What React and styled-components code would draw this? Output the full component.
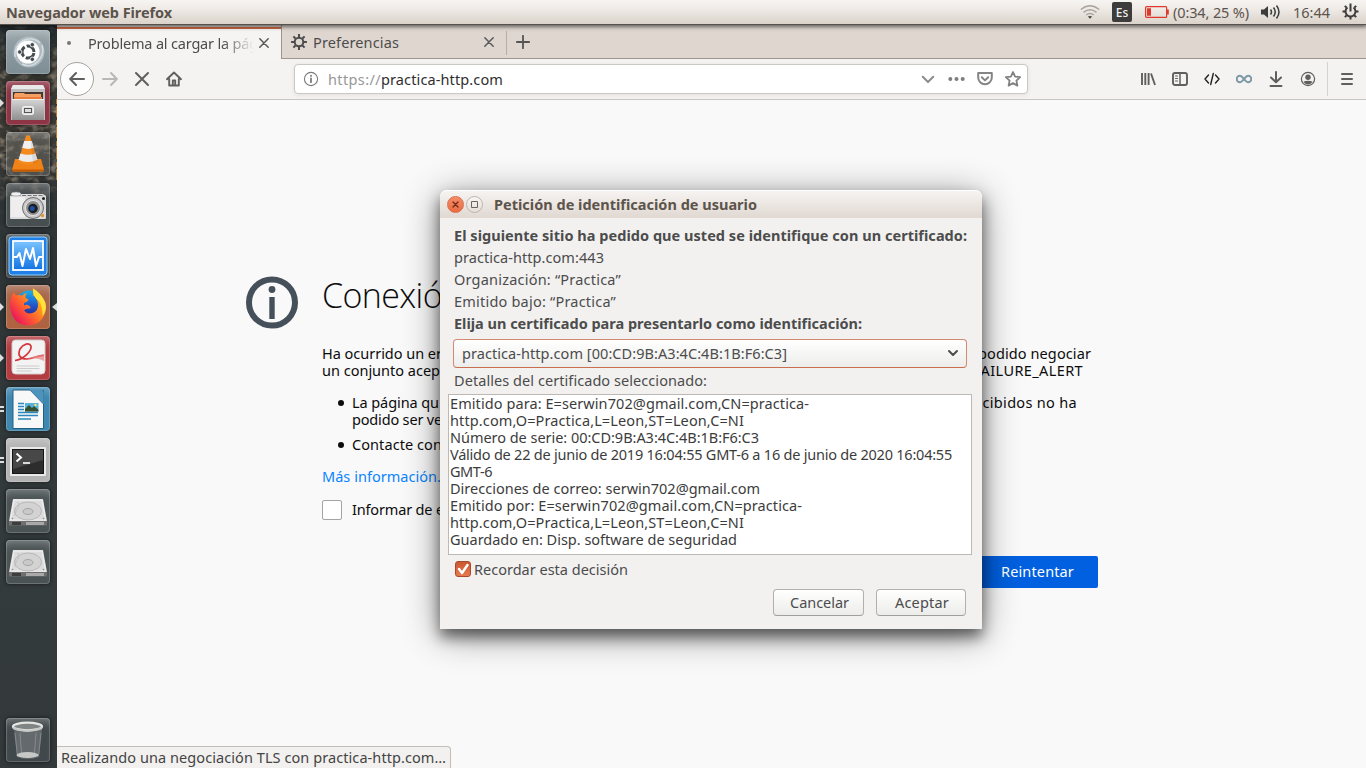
import React, { useLayoutEffect, useRef, useState } from "react";
import styled, { createGlobalStyle } from "styled-components";

const Global = createGlobalStyle`
  * { box-sizing: border-box; }
  body { margin: 0; overflow: hidden; }
  ul { margin: 0; padding: 0; list-style: none; }
  svg { display: block; flex: none; }
`;

/* ---------- text ---------- */

const Run = styled.span`
  white-space: pre;
  font-weight: ${(p) => (p.$bold ? 700 : "inherit")};
`;

/* A run of text whose tracking is adjusted so that it fills a given width. */
function Fit({ w, bold, children }) {
  const ref = useRef(null);
  const [tracking, setTracking] = useState(0);
  useLayoutEffect(() => {
    const natural = ref.current.getBoundingClientRect().width;
    setTracking((w - natural) / children.length);
  }, []);
  return (
    <Run ref={ref} $bold={bold} style={{ letterSpacing: `${tracking}px` }}>
      {children}
    </Run>
  );
}

/* ---------- desktop ---------- */

const Desktop = styled.div`
  position: relative;
  width: 1366px;
  height: 768px;
  overflow: hidden;
  display: flex;
  flex-direction: column;
  background: #33393b;
  color: #4c4c4c;
  font: 14.5px/20px "Noto Sans", "Open Sans", sans-serif;
`;

const Panel = styled.header`
  height: 24px;
  flex: none;
  position: relative;
  z-index: 3;
  display: flex;
  align-items: center;
  padding: 0 7px 1px 6px;
  color: #5c544c;
  background: linear-gradient(#f7f5f2, #efebe7 35%, #dbd3cb);
  box-shadow: 0 1px 0 #56524c, 0 2px 4px 1px rgba(0, 0, 0, 0.55);
`;

const Indicators = styled.div`
  margin-left: auto;
  display: flex;
  align-items: center;
`;

const Indicator = styled.div`
  display: flex;
  align-items: center;
  margin-left: ${(p) => p.$gap}px;
`;

const Keyboard = styled.div`
  width: 20px;
  height: 20px;
  margin: 1px 0 0 12px;
  border-radius: 2px;
  background: #3c3c3c;
  color: #f2f0ee;
  font-size: 12px;
  font-weight: 500;
  line-height: 21px;
  text-align: center;
`;

const Body = styled.div`
  flex: 1;
  min-height: 0;
  display: flex;
`;

/* ---------- launcher ---------- */

const Launcher = styled.nav`
  position: relative;
  width: 57px;
  flex: none;
  display: flex;
  flex-direction: column;
  padding: 6px 0 6px 6px;
  gap: 7px;
  background: linear-gradient(#252d30, #383731 60px, #3c3a35 120px, #2e3436 180px, #343b3d 520px, #33393b);
`;

const Wallpaper = styled.svg`
  position: absolute;
  left: 0;
  top: 0;
`;

const Tile = styled.div`
  position: relative;
  width: 44px;
  height: 44px;
  flex: none;
  margin-top: ${(p) => (p.$last ? "auto" : 0)};
  border-radius: 4px;
  background: ${(p) => p.$tint};
  box-shadow: inset 0 0 0 1px rgba(255, 255, 255, 0.18), inset 0 8px 8px -5px rgba(255, 255, 255, 0.3),
    0 0 4px rgba(0, 0, 0, 0.6);
`;

const Mark = styled.i`
  position: absolute;
  top: 18px;
  left: ${(p) => (p.$right ? "auto" : "-6px")};
  right: ${(p) => (p.$right ? "-7px" : "auto")};
  border: solid transparent;
  border-width: 4px;
  border-left: ${(p) => (p.$right ? "0" : "4px solid #dedede")};
  border-right: ${(p) => (p.$right ? "5px solid #dedede" : "0")};
`;

const Dash = styled.i`
  position: absolute;
  left: -6px;
  top: ${(p) => p.$top}px;
  width: 4px;
  height: 2px;
  background: #dedede;
`;

const glass = "rgba(125,135,138,0.32)";

function Drive() {
  return (
    <svg width="44" height="44" viewBox="0 0 44 44">
      <path d="M7 10h30l4 22H3z" fill="#dcdcdc" />
      <path d="M8 11h28l3.600 20H4.400z" fill="none" stroke="#f1f1f1" />
      <path d="M3 32h38v4.500H3z" fill="#6f6f6f" />
      <path d="M20 33h18v3H20z" fill="#a9a9a9" />
      <path d="M6 33h9v3H6z" fill="#3d3d3d" />
      <ellipse cx="22" cy="22" rx="13.500" ry="9" fill="#d3d3d3" stroke="#b0b0b0" strokeWidth=".8" />
      <ellipse cx="22" cy="22.500" rx="5" ry="3" fill="#c9c9c9" stroke="#999" strokeWidth=".8" />
      <path d="M11 13c6 3-3 8-2 14" fill="none" stroke="#bbb" strokeWidth=".8" />
      <circle cx="6.500" cy="29.500" r=".8" fill="#888" />
      <circle cx="37.500" cy="29.500" r=".8" fill="#888" />
    </svg>
  );
}

const DashIcon = () => (
  <svg width="44" height="44" viewBox="0 0 44 44">
    <circle cx="23" cy="22" r="15.500" fill="#b9c4c9" opacity=".75" />
    <path d="M9 27c-2-14 14-24 25-14 M36 15c4 13-9 25-20 19" fill="none" stroke="#d5dde0" strokeWidth="1.500" />
    <circle cx="22" cy="22" r="11.500" fill="#fff" />
    <circle cx="22" cy="22" r="6" fill="none" stroke="#454c50" strokeWidth="3" strokeDasharray="10.500 2.066" strokeDashoffset="-1" />
    <g fill="#454c50" stroke="#fff" strokeWidth=".8">
      <circle cx="13.700" cy="22" r="2.200" />
      <circle cx="26.300" cy="14.700" r="2.200" />
      <circle cx="26.300" cy="29.300" r="2.200" />
    </g>
  </svg>
);

const FilesIcon = () => (
  <svg width="44" height="44" viewBox="0 0 44 44">
    <defs>
      <linearGradient id="cabinet" x2="0" y2="1"><stop stopColor="#d6d6d6" /><stop offset="1" stopColor="#8f8f8f" /></linearGradient>
    </defs>
    <path d="M7 4h30l2 4v31H5V8z" fill="#bdbdbd" />
    <path d="M7 4h30l2 4H5z" fill="#e8e8e8" />
    <path d="M7 11h30v9H7z" fill="#4a3830" />
    <path d="M8 14l1-2h9l1 1h16v7H8z" fill="#f4a063" />
    <path d="M8 16h28v3H8z" fill="#e97c3d" />
    <path d="M6 18h32v21H6z" fill="url(#cabinet)" />
    <path d="M6 18.500h32" stroke="#eee" />
    <rect x="16.500" y="25.500" width="11" height="8" rx="1.500" fill="#ddd" stroke="#f1f1f1" />
    <rect x="18.500" y="27.500" width="7" height="4" fill="#ddd" stroke="#555" />
  </svg>
);

const ConeIcon = () => (
  <svg width="44" height="44" viewBox="0 0 44 44">
    <path d="M9 27h26l3 11q0 1.500-1.500 1.500h-29Q6 39.500 6 38z" fill="#f08317" />
    <path d="M6 37.500h32v1.500q-16 1-32 0z" fill="#c85b00" />
    <path d="M20 4q2-1.500 4 0l8 26q-10 6-20 0z" fill="#f58a1f" />
    <path d="M18.200 9h7.600l2 6.800q-5.800 2.200-11.600 0z" fill="#f1f1f1" />
    <path d="M14.500 21.500q7.500 2.500 15 0l2 6.300q-9.500 4.500-19 0z" fill="#ececec" />
    <path d="M24 4l8 26q-2 1.500-5 2z" fill="#000" opacity=".08" />
  </svg>
);

const CameraIcon = () => (
  <svg width="44" height="44" viewBox="0 0 44 44">
    <path d="M4 13l4-3h6l1 1h22l3 2v22q0 1-1 1H5q-1 0-1-1z" fill="#dcdcdc" />
    <path d="M5 12.500h33" stroke="#777" strokeDasharray="4 1.500" />
    <ellipse cx="10" cy="11" rx="5" ry="2" fill="#efefef" stroke="#999" strokeWidth=".6" />
    <path d="M5 14h14v20H5z" fill="#eee" />
    <circle cx="27" cy="25" r="10.500" fill="#c9c9c9" stroke="#6b6b6b" />
    <circle cx="27" cy="25" r="7.500" fill="#8c8c8c" stroke="#e8e8e8" />
    <circle cx="27" cy="25.500" r="4.700" fill="#1a1d22" />
    <circle cx="26.300" cy="25.500" r="2.500" fill="#1c4fa0" />
    <circle cx="37.500" cy="15.500" r="1.500" fill="#222" />
    <rect x="35" y="31" width="3" height="3" fill="#e29a3b" />
  </svg>
);

const MonitorIcon = () => (
  <svg width="44" height="44" viewBox="0 0 44 44">
    <defs>
      <linearGradient id="scope" x2="0" y2="1"><stop stopColor="#7cc4ff" /><stop offset="1" stopColor="#1173e2" /></linearGradient>
    </defs>
    <rect x="3" y="3" width="38" height="38" rx="3" fill="#2080e8" stroke="#8fd0ff" />
    <rect x="7" y="7" width="30" height="29" fill="url(#scope)" stroke="#fff" strokeWidth="1.800" />
    <path d="M7 23h4l2.500-4 3 13L20 15l4 10 3-11 3 18 3-9h4" fill="none" stroke="#fff" strokeWidth="2" strokeLinejoin="round" />
  </svg>
);

const FirefoxIcon = () => (
  <svg width="44" height="44" viewBox="0 0 44 44">
    <defs>
      <linearGradient id="fox" x1="1" y1="0" x2="0.100" y2="0.800">
        <stop stopColor="#ffe226" /><stop offset=".4" stopColor="#ff9a1c" /><stop offset=".7" stopColor="#ff5634" /><stop offset="1" stopColor="#e8175d" />
      </linearGradient>
      <linearGradient id="globe" x2="0" y2="1"><stop stopColor="#19b0e8" /><stop offset=".6" stopColor="#2152c9" /><stop offset="1" stopColor="#2a2a8c" /></linearGradient>
    </defs>
    <circle cx="23" cy="18.500" r="13" fill="url(#globe)" />
    <path d="M4 22C3.500 15 6 10 8 7q.5 2 2 3.500 3.500-1 6 .2Q18 8 21 8q-2 2-1.600 4.500Q21 14 22.500 14.500q-.5 2-4.500 3.500v2.500q3-1.500 5.500.5 2 2 0 2.500-3.500-.5-5.500 2 3 4 8.500 2.500 6-2 5.500-9Q31 12 26.500 10q1.500-.5 0-6.500 5 2.500 6.500 6.500 1.500-.5 2.500 1 5.500 7 4 15-3 13.500-17 14.500Q6.500 40 4 22z" fill="url(#fox)" />
    <path d="M27 3.500Q35 7.500 39.500 18q1.500 8-3 13Q37 22 33 16 26.500 12 27 3.500z" fill="#ffe13b" />
  </svg>
);

const PdfIcon = () => (
  <svg width="44" height="44" viewBox="0 0 44 44">
    <rect x="6" y="4" width="33" height="34" rx="3.500" fill="#f3f3f3" stroke="#d2cccc" />
    <path d="M9 24.500C17 24 26 15 25 10c-1.500-4-8-2-11 3-3 7 1 10 6.500 10 7 0 12-4 17.500-3.500" fill="none" stroke="#d4353c" strokeWidth="1.700" />
    <path d="M21 23q8-4 17-4v6q-7-4-17-2z" fill="#e98a8a" opacity=".75" />
    <path d="M10.500 30h23M10.500 32.500h23M10.500 35h15" stroke="#ccc" />
  </svg>
);

const WriterIcon = () => (
  <svg width="44" height="44" viewBox="0 0 44 44">
    <path d="M24 3h14v13z" fill="#2f7299" />
    <path d="M7 3h17l13.500 14v24.500H7z" fill="#f8f8f8" stroke="#245f80" />
    <path d="M24 3l13.500 14V6q0-3-3-3z" fill="#4e93bb" />
    <path d="M12 16.500h6M12 19.500h6M12 22.500h6M12 25.500h20M12 28.500h20M12 32h13" stroke="#2b87bd" strokeWidth="1.500" />
    <path d="M19 16h13.500v8.500H19z" fill="#56b3dc" />
    <path d="M19 24.500V22l4-4 3 3 2-2 4.500 4v1.500z" fill="#36502e" />
    <circle cx="29.500" cy="18" r="1.200" fill="#ffe36b" />
  </svg>
);

const TerminalIcon = () => (
  <svg width="44" height="44" viewBox="0 0 44 44">
    <rect x="4" y="9" width="36" height="29" rx="1" fill="#e9e9e9" />
    <rect x="6.500" y="11.500" width="31" height="24" fill="#2d2d2d" stroke="#151515" />
    <path d="M7 12h30v10L7 31z" fill="#484848" />
    <path d="M10.500 15.500l4.500 4-4.500 4" fill="none" stroke="#fff" strokeWidth="2" />
    <path d="M17 25h7" stroke="#fff" strokeWidth="1.600" />
  </svg>
);

const TrashIcon = () => (
  <svg width="44" height="44" viewBox="0 0 44 44">
    <path d="M8 11h28l-3 28q-11 4-22 0z" fill="#7b8183" opacity=".6" />
    <path d="M9 15l2.500 23M35 15l-2.500 23M14 15l1.500 20M30 15l-1.500 20" stroke="#a9adae" strokeWidth=".7" opacity=".7" />
    <ellipse cx="21.500" cy="37" rx="11" ry="3" fill="#c6c8c6" />
    <ellipse cx="21.500" cy="8.500" rx="14.500" ry="3.800" fill="#7f8484" stroke="#e4e6e3" strokeWidth="2.200" />
    <path d="M7 10q14 6 29 0" fill="none" stroke="#c6c9c4" strokeWidth="2" />
  </svg>
);

const apps = [
  { tint: "linear-gradient(#98a5ab,#7d8d94)", icon: <DashIcon /> },
  { tint: "#8d3445", icon: <FilesIcon />, left: true },
  { tint: "rgba(120,120,115,0.38)", icon: <ConeIcon /> },
  { tint: glass, icon: <CameraIcon /> },
  { tint: glass, icon: <MonitorIcon /> },
  { tint: "linear-gradient(#a5694f,#b0623e)", icon: <FirefoxIcon />, left: true, right: true },
  { tint: "#b23c40", icon: <PdfIcon />, left: true },
  { tint: "#3d87b0", icon: <WriterIcon />, dashes: true },
  { tint: "#b3b3b3", icon: <TerminalIcon />, dashes: true },
  { tint: glass, icon: <Drive /> },
  { tint: glass, icon: <Drive /> },
  { tint: "rgba(125,135,138,0.2)", icon: <TrashIcon />, last: true },
];

/* ---------- browser ---------- */

const Browser = styled.section`
  flex: 1;
  min-width: 0;
  display: flex;
  flex-direction: column;
  background: #f9f9f9;
`;

const TabStrip = styled.div`
  height: 35px;
  flex: none;
  display: flex;
  background: #dfd6d0;
`;

const Tab = styled.div`
  width: ${(p) => (p.$active ? 224 : 225)}px;
  margin-top: ${(p) => (p.$active ? 3 : 0)}px;
  display: flex;
  align-items: center;
  padding: ${(p) => (p.$active ? "0 12px 3px 8px" : "3px 12px 1px 9px")};
  border-top: ${(p) => (p.$active ? "2px solid #cf6a43" : "0")};
  border-left: ${(p) => (p.$active ? "0" : "1px solid #9c948d")};
  border-bottom: ${(p) => (p.$active ? "0" : "1px solid #9c948d")};
  background: ${(p) => (p.$active ? "#f5f4f2" : "transparent")};
`;

const Throbber = styled.i`
  width: 4px;
  height: 4px;
  margin: 0 17px 0 2px;
  border-radius: 50%;
  background: #777;
`;

const TabLabel = styled.div`
  flex: 1;
  min-width: 0;
  overflow: hidden;
  margin-left: ${(p) => p.$indent || 0}px;
  mask-image: ${(p) => (p.$fade ? "linear-gradient(90deg,#000 134px,transparent 166px)" : "none")};
`;

const NewTab = styled.div`
  flex: 1;
  padding: 11px 0 0 9px;
  border-bottom: 1px solid #9c948d;
`;

const Divider = styled.i`
  flex: none;
  width: 1px;
  height: ${(p) => p.$h}px;
  margin: ${(p) => p.$margin};
  background: #d6d2cd;
`;

const TabDivider = styled.div`
  width: 1px;
  border-bottom: 1px solid #9c948d;
  background: linear-gradient(transparent 7px, #b5ada6 7px, #b5ada6 31px, transparent 31px);
`;

const Toolbar = styled.div`
  height: 41px;
  flex: none;
  display: flex;
  align-items: center;
  padding: 0 11px 0 3px;
  background: #f4f3f1;
  border-bottom: 1px solid #c9c5c1;
`;

const BackButton = styled.div`
  width: 34px;
  height: 34px;
  border-radius: 50%;
  border: 1px solid #a5a29e;
  background: #fdfdfd;
  display: grid;
  place-items: center;
`;

const NavIcons = styled.div`
  display: flex;
  gap: 16px;
  margin: 0 112px 0 8px;
`;

const UrlBar = styled.div`
  width: 734px;
  height: 30px;
  display: flex;
  align-items: center;
  padding: 0 6px 0 8px;
  border: 1px solid #cbc7c3;
  border-radius: 4px;
  background: #fff;
  box-shadow: 0 1px 4px rgba(0, 0, 0, 0.08);
`;

const Url = styled.div`
  flex: 1;
  margin-left: 9px;
  color: #2f2f2f;
`;

const Scheme = styled.span`
  color: #989898;
`;

const UrlActions = styled.div`
  display: flex;
  align-items: center;
  gap: 12px;
`;

const Tools = styled.div`
  display: flex;
  align-items: center;
  gap: 16px;
  margin-left: auto;
`;

/* ---------- error page ---------- */

const Page = styled.main`
  flex: 1;
  display: flex;
  padding: 176px 268px 0 188px;
  color: #0c0c0d;
`;

const Article = styled.div`
  width: 776px;
  margin-left: 23px;
`;

const Title = styled.h1`
  margin: -1px 0 29px;
  font: 300 34px/41px "Open Sans", "Noto Sans", sans-serif;
  white-space: nowrap;
`;

const Line = styled.div`
  display: flex;
  justify-content: space-between;
  height: 17px;
  line-height: 17px;
  padding-right: ${(p) => p.$end || 0}px;
  white-space: nowrap;
`;

const Bullets = styled.ul`
  margin: 15px 0 15px 30px;
`;

const Bullet = styled.li`
  position: relative;
  margin-bottom: 8px;
  &::before {
    content: "";
    position: absolute;
    left: -14px;
    top: 6px;
    width: 6px;
    height: 6px;
    border-radius: 50%;
    background: #0c0c0d;
  }
`;

const Link = styled.a`
  display: block;
  line-height: 17px;
  color: #0a84ff;
`;

const Report = styled.label`
  display: flex;
  align-items: center;
  gap: 10px;
  height: 20px;
  margin-top: 15px;
  line-height: 18px;
  white-space: nowrap;
`;

const ReportText = styled.span`
  padding-bottom: 2px;
`;

const Box = styled.i`
  width: 20px;
  height: 20px;
  border: 1px solid #a3a3a3;
  border-radius: 2px;
  background: #fff;
`;

const Retry = styled.button`
  display: block;
  width: 150px;
  height: 32px;
  margin: 36px 0 0 auto;
  padding: 0 0 2px 29px;
  border: 0;
  border-radius: 2px;
  background: #0060df;
  color: #fff;
  font: inherit;
`;

const Status = styled.div`
  position: absolute;
  left: 57px;
  bottom: 0;
  width: 394px;
  height: 22px;
  padding: 0 4px;
  border: solid #c4bcb6;
  border-width: 1px 1px 0 0;
  border-radius: 0 4px 0 0;
  background: #f2f1ef;
  color: #444;
`;

/* ---------- certificate dialog ---------- */

const Dialog = styled.div`
  position: absolute;
  left: 440px;
  top: 190px;
  width: 542px;
  height: 439px;
  border-radius: 7px 7px 0 0;
  background: #f2f1f0;
  box-shadow: 0 8px 14px rgba(0, 0, 0, 0.5), 0 6px 36px rgba(0, 0, 0, 0.45);
`;

const TitleBar = styled.div`
  height: 28px;
  display: flex;
  align-items: center;
  padding: 0 8px 0 7px;
  border-radius: 7px 7px 0 0;
  color: #5c544c;
  background: linear-gradient(#f6f4f2, #ede8e4 45%, #e0d8d1);
  box-shadow: inset 0 1px 0 #fff;
`;

const WindowButton = styled.div`
  width: 17px;
  height: 17px;
  margin-right: 2px;
  border-radius: 50%;
  border: 1px solid ${(p) => (p.$close ? "#d9704b" : "#bdb5ac")};
  background: ${(p) => (p.$close ? "linear-gradient(#f58e68,#ea6a42)" : "linear-gradient(#f8f6f4,#e3ddd7)")};
  display: grid;
  place-items: center;
`;

const TitleText = styled.div`
  margin-left: 9px;
`;

const DialogBody = styled.div`
  padding: 6px 10px 0 8px;
`;

const Row = styled.div`
  height: 22px;
  line-height: 22px;
  padding-left: 6px;
  white-space: nowrap;
`;

const Select = styled.div`
  display: flex;
  align-items: center;
  justify-content: space-between;
  height: 29px;
  margin: 5px 5px 1px;
  padding: 0 7px 1px 8px;
  border: 1px solid #d18b73;
  border-bottom-color: #c96f50;
  border-radius: 4px;
  background: linear-gradient(#fff, #ededeb);
`;

const Details = styled.div`
  height: 161px;
  margin-top: 3px;
  padding: 0 1px;
  border: 1px solid #bdb8b3;
  background: #fff;
  color: #3c3c3c;
`;

const Remember = styled.label`
  display: flex;
  align-items: center;
  gap: 3px;
  height: 16px;
  margin: 6px 0 0 7px;
`;

const Checked = styled.i`
  width: 16px;
  height: 16px;
  border-radius: 3px;
  border: 1px solid #a84a2c;
  background: linear-gradient(#cb5832, #e57a50);
`;

const Actions = styled.div`
  display: flex;
  justify-content: flex-end;
  gap: 12px;
  margin: 12px 6px 0 0;
`;

const Button = styled.button`
  width: ${(p) => p.$w}px;
  height: 27px;
  padding: 0 0 0 2px;
  border: 1px solid #b3b0ac;
  border-bottom-color: #a29f9b;
  border-radius: 4px;
  background: linear-gradient(#fff, #ececea);
  color: #4c4c4c;
  font: inherit;
  line-height: 25px;
`;

/* ---------- line icons ---------- */

function Glyph({ s = 16, c = "#5f5f5e", sw = 2, children, vb = "0 0 16 16" }) {
  return (
    <svg width={s} height={s} viewBox={vb} fill="none" stroke={c} strokeWidth={sw} strokeLinecap="round" strokeLinejoin="round">
      {children}
    </svg>
  );
}

const Close = () => (
  <Glyph s={10} sw={1.5} vb="0 0 10 10" c="#595959"><path d="M.8.8l8.400 8.400M9.200.8L.8 9.200" /></Glyph>
);

const spokes = [0, 45, 90, 135, 180, 225, 270, 315];

const details = [
  ["Emitido para: E=serwin702@gmail.com,CN=practica-", 359],
  ["http.com,O=Practica,L=Leon,ST=Leon,C=NI", 294],
  ["Número de serie: 00:CD:9B:A3:4C:4B:1B:F6:C3", 309],
  ["Válido de 22 de junio de 2019 16:04:55 GMT-6 a 16 de junio de 2020 16:04:55", 502],
  ["GMT-6", 42],
  ["Direcciones de correo: serwin702@gmail.com", 310],
  ["Emitido por: E=serwin702@gmail.com,CN=practica-", 352],
  ["http.com,O=Practica,L=Leon,ST=Leon,C=NI", 294],
  ["Guardado en: Disp. software de seguridad", 287],
];

export default function App() {
  return (
    <Desktop>
      <Global />
      <Panel>
        <Fit w={166} bold>Navegador web Firefox</Fit>
        <Indicators>
          <svg width="20" height="14" viewBox="0 0 20 14" fill="none" strokeWidth="1.500">
            <path d="M.8 4.500q9.200-7.500 18.400 0M3.500 7.300q6.500-5 13 0M6.200 9.800q3.800-2.800 7.600 0" stroke="#aaa59f" />
            <path d="M7.800 11.500q2.200-1.200 4.400 0L10 13.800z" fill="#4a4743" />
          </svg>
          <Keyboard>Es</Keyboard>
          <Indicator $gap={13}>
            <svg width="24" height="12" viewBox="0 0 24 12">
              <rect x=".6" y=".6" width="21" height="10.800" rx="1" fill="none" stroke="#df382c" strokeWidth="1.200" />
              <path d="M2 2.200h4v7.600H2zM22 3.500h1.800v5H22z" fill="#df382c" />
            </svg>
          </Indicator>
          <Indicator $gap={4}><Fit w={76}>(0:34, 25 %)</Fit></Indicator>
          <Indicator $gap={12}>
            <svg width="20" height="16" viewBox="0 0 20 16" fill="none" stroke="#3c3c3c" strokeWidth="1.500">
              <path d="M0 5.500h3L7 2v12l-4-3.500H0z" fill="#3c3c3c" stroke="none" />
              <path d="M9.500 5.500q2 2.500 0 5M12.500 3.500q3.500 4.500 0 9M15.500 1.500q5 6.500 0 13" />
            </svg>
          </Indicator>
          <Indicator $gap={12}><Fit w={37}>16:44</Fit></Indicator>
          <Indicator $gap={12}>
            <svg width="17" height="17" viewBox="-8.500 -8.500 17 17" fill="none" stroke="#3c3c3c" strokeWidth="2">
              <path d="M-3 -4A5 5 0 1 0 3 -4M0 -8V0" />
              {spokes.slice(1).map((a) => <path key={a} d="M0 -5.500V-8" transform={`rotate(${a})`} />)}
            </svg>
          </Indicator>
        </Indicators>
      </Panel>

      <Body>
        <Launcher>
          <Wallpaper width="57" height="250" viewBox="0 0 57 250">
            <defs>
              <filter id="leaves" x="0" y="0" width="100%" height="100%">
                <feTurbulence type="fractalNoise" baseFrequency=".1 .14" numOctaves="3" seed="7" />
                <feColorMatrix values="0 0 0 0 .5  0 0 0 0 .41  0 0 0 0 .31  2.500 1.500 0 0 -1.900" />
              </filter>
              <linearGradient id="fall" x2="0" y2="1">
                <stop stopColor="#fff" stopOpacity=".15" /><stop offset=".35" stopColor="#fff" stopOpacity=".7" />
                <stop offset=".6" stopColor="#fff" stopOpacity=".6" /><stop offset=".72" stopColor="#fff" stopOpacity=".06" />
                <stop offset="1" stopColor="#fff" stopOpacity="0" />
              </linearGradient>
              <mask id="shade"><rect width="57" height="250" fill="url(#fall)" /></mask>
            </defs>
            <g mask="url(#shade)"><rect width="57" height="250" filter="url(#leaves)" /></g>
            <path d="M56.500 75v83" stroke="#d98324" strokeDasharray="5 2 11 3" opacity=".8" />
          </Wallpaper>
          {apps.map((a, i) => (
            <Tile key={i} $tint={a.tint} $last={a.last}>
              {a.icon}
              {a.left && <Mark />}
              {a.right && <Mark $right />}
              {a.dashes && <><Dash $top={19} /><Dash $top={23} /></>}
            </Tile>
          ))}
        </Launcher>

        <Browser>
          <TabStrip>
            <Tab $active>
              <Throbber />
              <TabLabel $fade><Fit w={170}>Problema al cargar la pág</Fit></TabLabel>
              <Close />
            </Tab>
            <Tab>
              <svg width="16" height="16" viewBox="-8 -8 16 16" fill="none" stroke="#4c4c4c" strokeWidth="2">
                <circle r="4.300" />
                {spokes.map((a) => <path key={a} d="M0 -5V-7.900" transform={`rotate(${a})`} />)}
              </svg>
              <TabLabel $indent={6}><Fit w={86}>Preferencias</Fit></TabLabel>
              <Close />
            </Tab>
            <TabDivider />
            <NewTab><Glyph s={14} vb="0 0 14 14" sw={1.800} c="#555"><path d="M7 .8v12.400M.8 7h12.400" /></Glyph></NewTab>
          </TabStrip>

          <Toolbar>
            <BackButton><Glyph><path d="M15 8H1.500M7 2L1.200 8 7 14" /></Glyph></BackButton>
            <NavIcons>
              <Glyph c="#b9b8b6"><path d="M1 8h13.500M9 2l5.800 6L9 14" /></Glyph>
              <Glyph><path d="M2 2l12 12M14 2L2 14" /></Glyph>
              <Glyph sw={1.900}><path d="M1 8.200L8 1.500l7 6.700M3.200 8v6.500h9.600V8" /><path d="M6.800 14V9.500h2.400V14" /></Glyph>
            </NavIcons>
            <UrlBar>
              <Glyph c="#7b7b7b" sw={1.100}>
                <circle cx="8" cy="8" r="6.600" /><path d="M8 7.500v3.700" strokeWidth="1.800" /><path d="M8 4.800v.1" strokeWidth="1.900" />
              </Glyph>
              <Url><Scheme><Fit w={53}>https://</Fit></Scheme><Fit w={122}>practica-http.com</Fit></Url>
              <UrlActions>
                <Glyph c="#8c8c8c"><path d="M2.800 5.800L8 11l5.200-5.200" /></Glyph>
                <svg width="17" height="16" viewBox="0 0 17 16" fill="#7d7d7d">
                  <circle cx="2.300" cy="8" r="2" /><circle cx="8.500" cy="8" r="2" /><circle cx="14.700" cy="8" r="2" />
                </svg>
                <Glyph c="#858585"><path d="M1.200 2h13.600v4.500a6.800 6.800 0 0 1-13.600 0z" /><path d="M4.800 6.300L8 9.400l3.200-3.100" /></Glyph>
                <Glyph c="#808080" sw={1.800}><path d="M8 1l2.100 4.600 5 .6-3.700 3.400 1 5L8 12.100l-4.400 2.500 1-5L.9 6.200l5-.6z" /></Glyph>
              </UrlActions>
            </UrlBar>
            <Tools>
              <Glyph><path d="M2 2v12M5.300 2v12M8.600 2v12M11 2.500l4 11.500" strokeWidth="1.900" strokeLinecap="butt" /></Glyph>
              <Glyph sw={1.900}><rect x="1" y="2" width="14" height="12" rx="2" /><path d="M8 2v12" strokeWidth="1.500" /><path d="M3.500 5h2M3.500 7.500h2M3.500 10h2" strokeWidth="1" /></Glyph>
              <Glyph c="#222" sw={1.400}><path d="M4.500 4L1 8l3.500 4M11.500 4L15 8l-3.500 4M9.300 2.500L6.700 13.500" /></Glyph>
              <Glyph c="#7d9aa6"><path d="M8 8C6.200 5.800 5.400 4.800 3.900 4.800a3.200 3.200 0 0 0 0 6.400C5.400 11.200 6.200 10.200 8 8s2.600-3.200 4.100-3.200a3.200 3.200 0 0 1 0 6.400C10.600 11.200 9.800 10.200 8 8z" /></Glyph>
              <Glyph><path d="M8 1v10M3 6.500L8 11.300l5-4.800M2.500 15h11" /></Glyph>
              <Glyph sw={1.200}><circle cx="8" cy="8" r="6.600" /><circle cx="8" cy="6.300" r="2.700" fill="#5f5f5e" stroke="none" /><path d="M3.500 10.500q4.500-1.500 9 0-1.500 3-4.500 3t-4.500-3z" fill="#5f5f5e" stroke="none" /></Glyph>
              <Divider $h={34} $margin="0 -5px 0 -5px" />
              <Glyph><path d="M3 3h10M3 8h10M3 13h10" /></Glyph>
            </Tools>
          </Toolbar>

          <Page>
            <svg width="54" height="54" viewBox="0 0 54 54">
              <circle cx="27" cy="26.500" r="23" fill="none" stroke="#45505b" strokeWidth="6" />
              <path d="M24.300 21h5.400v22h-5.400z" fill="#45505b" />
              <circle cx="27" cy="13.500" r="3.400" fill="#45505b" />
            </svg>
            <Article>
              <Title><Fit w={120}>Conexió</Fit></Title>
              <Line $end={7}><Fit w={120}>Ha ocurrido un er</Fit><Fit w={113}>podido negociar</Fit></Line>
              <Line $end={15}><Fit w={118}>un conjunto acep</Fit><Fit w={110}>FAILURE_ALERT</Fit></Line>
              <Bullets>
                <Bullet>
                  <Line $end={21}><Fit w={87}>La página qu</Fit><Fit w={109}>recibidos no ha</Fit></Line>
                  <Line><Fit w={90}>podido ser ve</Fit></Line>
                </Bullet>
                <Bullet>
                  <Line><Fit w={90}>Contacte con</Fit></Line>
                </Bullet>
              </Bullets>
              <Link><Fit w={119}>Más información.</Fit></Link>
              <Report><Box /><ReportText><Fit w={92}>Informar de e</Fit></ReportText></Report>
              <Retry><Fit w={73}>Reintentar</Fit></Retry>
            </Article>
          </Page>
        </Browser>
      </Body>

      <Status><Fit w={385}>Realizando una negociación TLS con practica-http.com…</Fit></Status>

      <Dialog>
        <TitleBar>
          <WindowButton $close><Glyph s={7} vb="0 0 7 7" sw={1.300} c="#6b2a16"><path d="M1 1l5 5M6 1L1 6" /></Glyph></WindowButton>
          <WindowButton>
            <svg width="7" height="7" viewBox="0 0 7 7"><path d="M.5.5h6v6h-6z" fill="none" stroke="#6c655e" /></svg>
          </WindowButton>
          <TitleText><Fit w={263} bold>Petición de identificación de usuario</Fit></TitleText>
        </TitleBar>
        <DialogBody>
          <Row><Fit w={513} bold>El siguiente sitio ha pedido que usted se identifique con un certificado:</Fit></Row>
          <Row><Fit w={150}>practica-http.com:443</Fit></Row>
          <Row><Fit w={167}>Organización: “Practica”</Fit></Row>
          <Row><Fit w={162}>Emitido bajo: “Practica”</Fit></Row>
          <Row><Fit w={408} bold>Elija un certificado para presentarlo como identificación:</Fit></Row>
          <Select>
            <Fit w={325}>practica-http.com [00:CD:9B:A3:4C:4B:1B:F6:C3]</Fit>
            <Glyph s={12} vb="0 0 12 12" c="#4c4c4c" sw={2}><path d="M2 4l4 4 4-4" /></Glyph>
          </Select>
          <Row><Fit w={253}>Detalles del certificado seleccionado:</Fit></Row>
          <Details>
            {details.map(([text, w], i) => <Line key={i}><Fit w={w}>{text}</Fit></Line>)}
          </Details>
          <Remember>
            <Checked><Glyph s={14} vb="0 0 14 14" c="#fff" sw={2.400}><path d="M3 7l3 4 5.500-8" /></Glyph></Checked>
            <Fit w={154}>Recordar esta decisión</Fit>
          </Remember>
          <Actions>
            <Button $w={91}><Fit w={59}>Cancelar</Fit></Button>
            <Button $w={90}><Fit w={54}>Aceptar</Fit></Button>
          </Actions>
        </DialogBody>
      </Dialog>
    </Desktop>
  );
}
